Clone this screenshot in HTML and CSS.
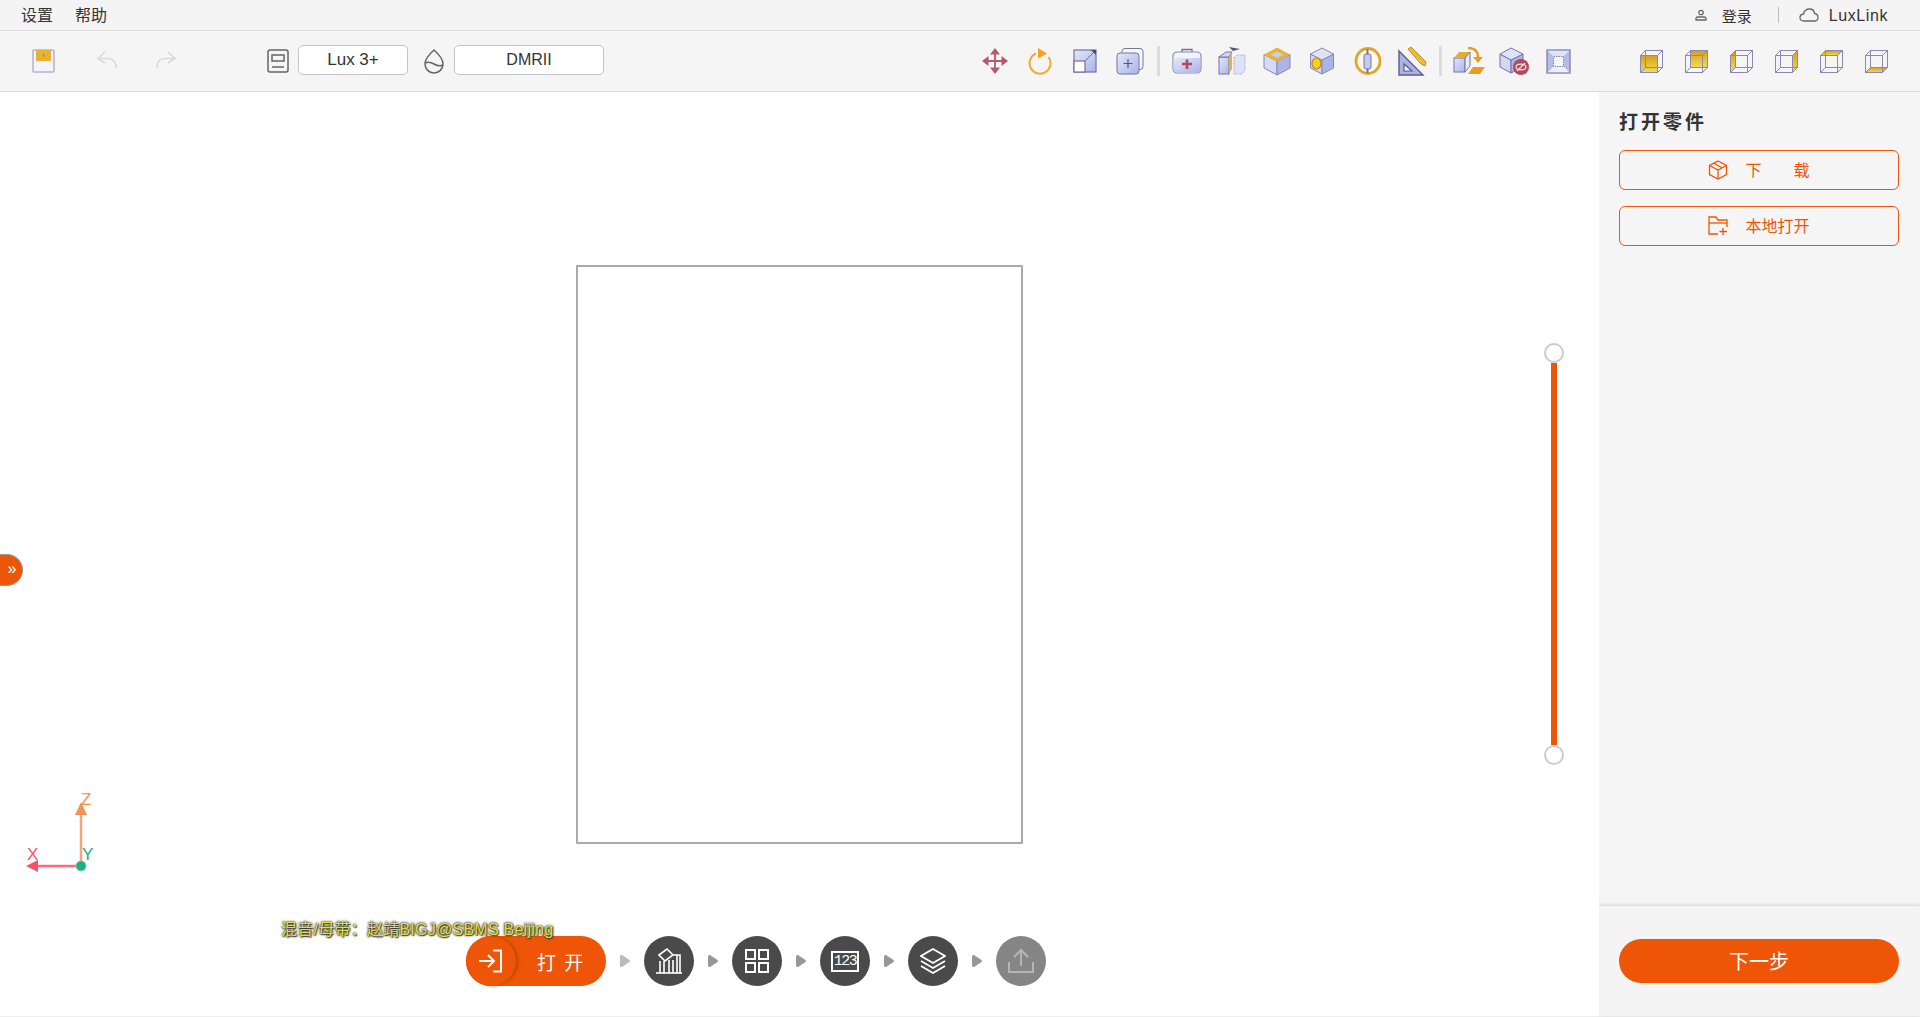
FILE: index.html

```html
<!DOCTYPE html>
<html lang="zh-CN">
<head>
  <meta charset="UTF-8" />
  <title>LuxLink</title>
  <link rel="stylesheet" href="styles.css">
</head>
<body>
  <svg class="defs" width="0" height="0">
    <defs>
      <linearGradient id="blue" x1="0" y1="0" x2="1" y2="1">
        <stop offset="0" stop-color="#e4e8fa" />
        <stop offset="1" stop-color="#a9b4ea" />
      </linearGradient>
      <linearGradient id="gold" x1="0" y1="0" x2="0" y2="1">
        <stop offset="0" stop-color="#d99a1e" />
        <stop offset="1" stop-color="#efe04e" />
      </linearGradient>
      <symbol id="wire" viewBox="0 0 24 24">
        <g fill="none" stroke="#8b86b3" stroke-width="1">
          <rect x="1.500" y="6.500" width="17" height="17" />
          <rect x="6.500" y="1.500" width="17" height="17" />
          <path d="M1.500 6.500l5-5M18.500 6.500l5-5M18.500 23.500l5-5M1.500 23.500l5-5" />
        </g>
      </symbol>
    </defs>
  </svg>

  <div class="menubar">
    <div class="menu-left">
      <span>设置</span>
      <span>帮助</span>
    </div>
    <div class="menu-right">
      <svg class="user-icon" width="12" height="12" viewBox="0 0 12 12" fill="none" stroke="#666" stroke-width="1.300">
        <circle cx="6" cy="3.500" r="2.200" />
        <path d="M1 11V9.500Q1 8 3 8H9Q11 8 11 9.500V11Z" />
      </svg>
      <span class="login">登录</span>
      <span class="menu-sep"></span>
      <svg class="cloud-icon" width="20" height="14" viewBox="0 0 20 14" fill="none" stroke="#666" stroke-width="1.300">
        <path d="M5 13Q1 13 1 9.500Q1 6.500 4.500 6Q5.500 1 10.500 1Q15 1 15.500 5.500Q19 6 19 9.500Q19 13 15 13Z" />
      </svg>
      <span class="luxlink">LuxLink</span>
    </div>
  </div>

  <div class="toolbar">
    <svg class="save-icon" width="23" height="24" viewBox="0 0 23 24">
      <rect x="1" y="1" width="21" height="22" rx="1" fill="#f4f4f8" stroke="#b5b0cc" stroke-width="1.500" />
      <rect x="4" y="1" width="15" height="11" rx="1" fill="#e5b23a" />
      <rect x="11" y="5" width="1" height="3" fill="#a87a10" />
    </svg>
    <svg class="undo-icon" width="22" height="20" viewBox="0 0 22 20" fill="none" stroke="#d9d9d9" stroke-width="1.600">
      <path d="M9 2L2 8.500L9 13M2 8.500H12Q20 8.500 20 18" />
    </svg>
    <svg class="redo-icon" width="22" height="20" viewBox="0 0 22 20" fill="none" stroke="#d9d9d9" stroke-width="1.600">
      <path d="M13 2L20 8.500L13 13M20 8.500H10Q2 8.500 2 18" />
    </svg>
    <svg class="model-icon" width="22" height="24" viewBox="0 0 22 24" fill="none" stroke="#666" stroke-width="1.500">
      <rect x="1" y="1" width="20" height="22" rx="2" />
      <rect x="5" y="6" width="12" height="6" />
      <path d="M5 18H17" />
    </svg>
    <button class="select-btn lux-btn">Lux 3+</button>
    <svg class="drop-icon" width="20" height="26" viewBox="0 0 20 26" fill="none" stroke="#666" stroke-width="1.500">
      <path d="M10 2Q19 10 19 16A9 9 0 0 1 1 16Q1 10 10 2Z" />
      <path d="M1 15Q5 13 10 16T19 17" />
    </svg>
    <button class="select-btn resin-btn">DMRII</button>

    <div class="tools">
      <div class="tool">
        <svg width="28" height="28" viewBox="0 0 28 28" fill="#b25a6f" stroke="none">
          <path d="M13.100 7h1.800v6.100H21V14.900h-6.100V21h-1.800v-6.100H7v-1.800h6.100Z" />
          <path d="M14 1l5 6.500H9ZM14 27l-5-6.500H19ZM1 14l6.500-5V19ZM27 14l-6.500 5V9Z" />
        </svg>
      </div>
      <div class="tool">
        <svg width="28" height="28" viewBox="0 0 28 28">
          <path d="M10 6.500A10.500 10.500 0 1 0 22.500 10" fill="none" stroke="#f5ab2e" stroke-width="2" />
          <path d="M12 1l9 5.500l-9 5Z" fill="#f5a01e" />
        </svg>
      </div>
      <div class="tool">
        <svg width="26" height="26" viewBox="0 0 26 26">
          <rect x="2" y="2" width="22" height="22" fill="url(#blue)" stroke="#7470a0" stroke-width="1.200" />
          <rect x="2" y="13" width="11" height="11" fill="#fff" stroke="#7470a0" stroke-width="1.200" />
          <path d="M13 13L24 2" stroke="#7470a0" stroke-width="1" />
          <path d="M19 2h5v5Z" fill="#4d4880" />
        </svg>
      </div>
      <div class="tool">
        <svg width="28" height="28" viewBox="0 0 28 28">
          <rect x="6" y="1.500" width="21" height="21" rx="3" fill="#f8f8fc" stroke="#77739f" stroke-width="1" />
          <rect x="1" y="6" width="22" height="21" rx="3" fill="url(#blue)" stroke="#77739f" stroke-width="1" />
          <path d="M12 12V21M7.500 16.500H16.500" stroke="#5a5680" stroke-width="1.200" />
        </svg>
      </div>
      <div class="tool-sep"></div>
      <div class="tool">
        <svg width="30" height="26" viewBox="0 0 30 26">
          <path d="M10 4V1.500H20V4" fill="none" stroke="#77739f" stroke-width="1.400" />
          <rect x="1" y="4" width="28" height="21" rx="4" fill="#f2f3fc" stroke="#8d89b0" stroke-width="1.200" />
          <path d="M1.500 10H28.500V21Q28.500 24.500 25 24.500H5Q1.500 24.500 1.500 21Z" fill="url(#blue)" />
          <path d="M15 11.500V21M10 16H20" stroke="#b5485f" stroke-width="2.600" />
        </svg>
      </div>
      <div class="tool">
        <svg width="28" height="30" viewBox="0 0 28 30">
          <path d="M11 1l11 2l-7 2Z" fill="#55507f" />
          <path d="M16 12l3-3h8v15l-3 4h-8Z" fill="#dfe3f7" stroke="#a5a9cc" stroke-width="1" stroke-dasharray="1.500 1" />
          <rect x="1" y="11" width="10" height="17" fill="url(#blue)" stroke="#77739f" stroke-width="1" />
          <path d="M1 11l7-5h6l-3 5Z" fill="#cfd6f6" stroke="#77739f" stroke-width="1" />
          <path d="M11 11l3-5v17l-3 5Z" fill="#e5b23a" />
        </svg>
      </div>
      <div class="tool">
        <svg width="30" height="30" viewBox="0 0 28 30">
          <path d="M1 8.500V22L14 29V15Z" fill="#d5daf5" stroke="#8a86b0" stroke-width="1" />
          <path d="M27 8.500V22L14 29V15Z" fill="#aab5ea" stroke="#8a86b0" stroke-width="1" />
          <path d="M14 1.500L27 8.500L14 15.500L1 8.500Z" fill="#e9b431" />
          <path d="M14 5.500L20.500 8.500L14 12L7.500 8.500Z" fill="#c5cdf0" />
        </svg>
      </div>
      <div class="tool">
        <svg width="28" height="30" viewBox="0 0 26 30">
          <path d="M1.500 8L13 14V28L1.500 22Z" fill="#d2d7f3" stroke="#8a86b0" stroke-width="1" />
          <path d="M24.500 8L13 14V28L24.500 22Z" fill="#aab5ea" stroke="#8a86b0" stroke-width="1" />
          <path d="M13 2L24.500 8L13 14L1.500 8Z" fill="#dfe3f8" stroke="#8a86b0" stroke-width="1" />
          <ellipse cx="7.500" cy="17.500" rx="4.500" ry="5.500" fill="#f0d030" stroke="#b98a16" stroke-width="1.200" />
        </svg>
      </div>
      <div class="tool">
        <svg width="28" height="28" viewBox="0 0 28 28">
          <ellipse cx="15" cy="14" rx="12" ry="12.500" fill="#fdf9ef" stroke="#e3a42c" stroke-width="2.800" />
          <rect x="11" y="7" width="7" height="15" rx="2" fill="#c3cbf0" stroke="#77739f" stroke-width="1" />
          <path d="M14.500 2V7M14.500 22V26" stroke="#77739f" stroke-width="2" />
        </svg>
      </div>
      <div class="tool">
        <svg width="30" height="30" viewBox="0 0 30 30">
          <path d="M11 3L14 1L29 16L28 20L24 18Z" fill="#edbb45" stroke="#c48d17" stroke-width="1" />
          <path d="M2 5L26 29H2Z" fill="#abb3e0" stroke="#5f5a90" stroke-width="1.400" />
          <path d="M7 18L15 25H7Z" fill="#f5f5f5" stroke="#5f5a90" stroke-width="1.200" />
        </svg>
      </div>
      <div class="tool-sep"></div>
      <div class="tool">
        <svg width="32" height="28" viewBox="0 0 32 28">
          <rect x="1" y="11" width="11" height="14" fill="url(#blue)" stroke="#77739f" stroke-width="1" />
          <path d="M1 11L6 5H17L12 11Z" fill="#e5ad2a" />
          <path d="M17 5V19L12 25V11Z" fill="#e7eafa" stroke="#77739f" stroke-width="1" />
          <path d="M15 1Q25 1 25 10" fill="none" stroke="#e59e1e" stroke-width="2.500" />
          <path d="M20 10H30L25 16Z" fill="#e59e1e" />
          <path d="M20 20H32L27 27H15Z" fill="#e59e1e" />
        </svg>
      </div>
      <div class="tool">
        <svg width="30" height="28" viewBox="0 0 30 28">
          <path d="M1 7L12 13V26L1 20Z" fill="#d2d7f3" stroke="#77739f" stroke-width="1" />
          <path d="M24 7L12 13V26L24 20Z" fill="#aab5ea" stroke="#77739f" stroke-width="1" />
          <path d="M12 1L24 7L12 13L1 7Z" fill="#dfe3f8" stroke="#77739f" stroke-width="1" />
          <circle cx="22" cy="20" r="8" fill="#b5485f" />
          <ellipse cx="22" cy="20" rx="5" ry="2.800" fill="none" stroke="#f5e5e8" stroke-width="1.200" />
          <path d="M18 24L26 16" stroke="#f5e5e8" stroke-width="1.200" />
        </svg>
      </div>
      <div class="tool">
        <svg width="25" height="25" viewBox="0 0 25 25">
          <rect x="1" y="1" width="23" height="23" fill="#b4bde9" stroke="#8a86b0" stroke-width="1.400" />
          <path d="M1.700 1.700L7.500 7.500H17.500L23.300 1.700Z" fill="#dfe3f7" />
          <path d="M1.700 23.300L7.500 17.500H17.500L23.300 23.300Z" fill="#eef0fb" />
          <rect x="7.500" y="7.500" width="10" height="10" fill="#f5f5f5" stroke="#8a86b0" stroke-width="1" stroke-dasharray="1.500 1" />
        </svg>
      </div>
    </div>

    <div class="tools views">
      <div class="tool">
        <svg width="24" height="24" viewBox="0 0 24 24">
          <rect x="1.500" y="6.500" width="17" height="17" fill="url(#gold)" />
          <use href="#wire" />
        </svg>
      </div>
      <div class="tool">
        <svg width="24" height="24" viewBox="0 0 24 24">
          <rect x="6.500" y="1.500" width="17" height="17" fill="url(#gold)" />
          <use href="#wire" />
        </svg>
      </div>
      <div class="tool">
        <svg width="24" height="24" viewBox="0 0 24 24">
          <path d="M1.500 6.500l5-5v17l-5 5Z" fill="url(#gold)" />
          <use href="#wire" />
        </svg>
      </div>
      <div class="tool">
        <svg width="24" height="24" viewBox="0 0 24 24">
          <path d="M18.500 6.500l5-5v17l-5 5Z" fill="url(#gold)" />
          <use href="#wire" />
        </svg>
      </div>
      <div class="tool">
        <svg width="24" height="24" viewBox="0 0 24 24">
          <path d="M1.500 6.500l5-5h17l-5 5Z" fill="url(#gold)" />
          <use href="#wire" />
        </svg>
      </div>
      <div class="tool">
        <svg width="24" height="24" viewBox="0 0 24 24">
          <path d="M1.500 23.500l5-5h17l-5 5Z" fill="url(#gold)" />
          <use href="#wire" />
        </svg>
      </div>
    </div>
  </div>

  <div class="main">
    <div class="canvas">
      <div class="build-plate"></div>

      <div class="toggle">»</div>

      <div class="slider">
        <span class="knob"></span>
        <span class="slider-bar"></span>
        <span class="knob"></span>
      </div>

      <svg class="axes" width="80" height="90" viewBox="0 0 80 90">
        <path d="M61 76V24" stroke="#f5a679" stroke-width="2.500" />
        <path d="M61 12l6 13h-12Z" fill="#f59356" />
        <path d="M61 76H14" stroke="#ff6b7c" stroke-width="2.500" />
        <path d="M6 76l12-6v12Z" fill="#ff5066" />
        <circle cx="61" cy="76" r="5" fill="#1fae7f" stroke="#6fcfae" stroke-width="1" />
        <text class="axis-label" x="61" y="15" fill="#f59356">Z</text>
        <text class="axis-label" x="7" y="70" fill="#ff5066">X</text>
        <text class="axis-label" x="62" y="70" fill="#1fae7f">Y</text>
      </svg>

      <div class="caption">混音/母带：赵靖BIGJ@SBMS Beijing</div>

      <div class="stepper">
        <div class="step-current">
          <span class="step-current-icon">
            <svg width="26" height="26" viewBox="0 0 26 26" fill="none" stroke="#fff" stroke-width="2">
              <path d="M1 13H15M10 7L16 13L10 19" />
              <path d="M15 2.500H23V23.500H15" />
            </svg>
          </span>
          <span class="step-current-text">打 开</span>
        </div>
        <span class="step-arrow first"></span>
        <div class="step">
          <svg width="28" height="28" viewBox="0 0 28 28" fill="none" stroke="#fff" stroke-width="1.600">
            <path d="M1 26H27" />
            <path d="M5 26V14M9 26V14M14 26V13M18 26V13M22 26V8" />
            <path d="M4 8L12 2L18 8L10 14Z" />
            <path d="M18 8H25V26" />
          </svg>
        </div>
        <span class="step-arrow"></span>
        <div class="step">
          <svg width="24" height="24" viewBox="0 0 24 24" fill="none" stroke="#fff" stroke-width="2">
            <rect x="1" y="1" width="9" height="9" />
            <rect x="14" y="1" width="9" height="9" />
            <rect x="1" y="14" width="9" height="9" />
            <rect x="14" y="14" width="9" height="9" />
          </svg>
        </div>
        <span class="step-arrow"></span>
        <div class="step">
          <span class="count-box">123</span>
        </div>
        <span class="step-arrow"></span>
        <div class="step">
          <svg width="26" height="26" viewBox="0 0 26 26" fill="none" stroke="#fff" stroke-width="1.800">
            <path d="M13 1L25 8L13 15L1 8Z" />
            <path d="M1 13L13 20L25 13" />
            <path d="M1 18L13 25L25 18" />
          </svg>
        </div>
        <span class="step-arrow"></span>
        <div class="step step-disabled">
          <svg width="26" height="26" viewBox="0 0 26 26" fill="none" stroke="#b5b5b5" stroke-width="2">
            <path d="M13 18V2M6 9L13 2L20 9" />
            <path d="M1 14V24H25V14" />
          </svg>
        </div>
      </div>
    </div>

    <div class="panel">
      <div class="panel-body">
        <div class="panel-title">打开零件</div>
        <button class="outline-btn">
          <svg width="20" height="20" viewBox="0 0 20 20" fill="none" stroke="#ee5506" stroke-width="1.300">
            <path d="M10 1L18.500 5.500V14.500L10 19L1.500 14.500V5.500Z" />
            <path d="M1.500 5.500L10 10L18.500 5.500M10 10V19" />
            <path d="M6 3.200L14 7.800" />
          </svg>
          <span class="btn-label">下　　载</span>
        </button>
        <button class="outline-btn">
          <svg width="20" height="20" viewBox="0 0 20 20" fill="none" stroke="#ee5506" stroke-width="1.300">
            <path d="M10 18H1V1H8L10 4H19V11" />
            <path d="M1 7H19" />
            <path d="M15 12V19M11.500 15.500H19" />
          </svg>
          <span class="btn-label">本地打开</span>
        </button>
      </div>
      <div class="panel-footer">
        <button class="next-btn">下一步</button>
      </div>
    </div>
  </div>
</body>
</html>
```

FILE: styles.css

```css
* {
  box-sizing: border-box;
}
html, body {
  height: 100%;
}
body {
  font-family: 'Liberation Sans', 'Noto Sans CJK SC', sans-serif;
  margin: 0;
  padding: 0;
  background: #fff;
  color: #333;
  display: flex;
  flex-direction: column;
  overflow: hidden;
}
button {
  font-family: inherit;
  cursor: pointer;
}
.defs {
  position: absolute;
}

.menubar {
  height: 31px;
  flex: none;
  background: #f4f4f4;
  border-bottom: 1px solid #ddd;
  display: flex;
  justify-content: space-between;
  align-items: center;
  padding: 0 32px 0 21px;
  font-size: 16px;
}
.menu-left {
  display: flex;
  gap: 22px;
  margin-bottom: 3px;
}
.menu-right {
  display: flex;
  align-items: center;
}
.login {
  margin-left: 15px;
  font-size: 15px;
}
.menu-sep {
  width: 1px;
  height: 16px;
  background: #bbb;
  margin: 0 20px 0 26px;
}
.luxlink {
  margin-left: 10px;
  margin-top: 2px;
  font-size: 16px;
  letter-spacing: 0.6px;
}

.toolbar {
  height: 61px;
  flex: none;
  background: #f5f5f5;
  border-bottom: 1px solid #ddd;
  display: flex;
  align-items: center;
  padding: 0 22px 0 32px;
}
.undo-icon {
  margin-left: 41px;
  margin-bottom: 2px;
}
.redo-icon {
  margin-left: 37px;
  margin-bottom: 2px;
}
.model-icon {
  margin-left: 90px;
}
.select-btn {
  height: 30px;
  margin-bottom: 2px;
  background: #fff;
  border: 1px solid #c4c4c4;
  border-radius: 5px;
  color: #333;
  padding: 0;
}
.lux-btn {
  width: 110px;
  margin-left: 9px;
  font-size: 17px;
}
.drop-icon {
  margin-left: 16px;
}
.resin-btn {
  width: 150px;
  margin-left: 10px;
  font-size: 16px;
}
.tools {
  display: flex;
  align-items: center;
  margin-left: auto;
}
.views {
  margin-left: 47px;
}
.tool {
  width: 45px;
  display: flex;
  justify-content: center;
  align-items: center;
}
.tool-sep {
  width: 3px;
  height: 30px;
  background: #dcdcdc;
  margin: 0 4.500px;
}

.main {
  flex: 1;
  display: flex;
  min-height: 0;
  border-bottom: 1px solid #eee;
}
.canvas {
  flex: 1;
  position: relative;
  display: flex;
  align-items: center;
  justify-content: center;
  background: #fff;
}
.build-plate {
  width: 447px;
  height: 579px;
  border: 2px solid #aaa;
  border-radius: 1px;
}
.toggle {
  position: absolute;
  left: 0;
  top: 462px;
  width: 23px;
  height: 32px;
  padding-left: 2px;
  background: #ee5506;
  border: 1px solid #999;
  border-left: none;
  border-radius: 0 16px 16px 0;
  color: #fff;
  font-size: 16px;
  line-height: 28px;
  text-align: center;
}
.slider {
  position: absolute;
  right: 35px;
  top: 251px;
  display: flex;
  flex-direction: column;
  align-items: center;
}
.knob {
  width: 20px;
  height: 20px;
  border: 2px solid #ccc;
  border-radius: 50%;
  background: #fff;
}
.slider-bar {
  width: 6px;
  height: 382px;
  background: #ee5506;
}
.axes {
  position: absolute;
  left: 20px;
  top: 698px;
}
.axis-label {
  font-size: 17px;
  font-family: 'Liberation Sans', sans-serif;
}
.caption {
  position: absolute;
  left: 281px;
  top: 828px;
  z-index: 2;
  font-size: 16px;
  line-height: 20px;
  letter-spacing: 0.25px;
  color: #e8e030;
  text-shadow: 0 0 3px #222, 0 0 2px #333, 1px 1px 1px #555;
  white-space: nowrap;
}
.stepper {
  position: absolute;
  left: 466px;
  bottom: 30px;
  display: flex;
  align-items: center;
  gap: 14px;
}
.step-current {
  width: 140px;
  height: 50px;
  border-radius: 25px;
  background: #ee5506;
  display: flex;
  align-items: center;
  color: #fff;
}
.step-current-icon {
  width: 50px;
  height: 50px;
  border-radius: 50%;
  background: #ee5506;
  box-shadow: 2px 0 3px rgba(150, 60, 0, 0.55);
  display: flex;
  align-items: center;
  justify-content: center;
}
.step-current-text {
  margin-left: 21px;
  font-size: 19px;
  letter-spacing: 1.5px;
  white-space: pre;
}
.step-arrow {
  width: 10px;
  height: 13px;
  background: #9b9794;
  clip-path: path('M0 2Q0 0 2 0.500L9.500 5.500Q11 6.500 9.500 7.500L2 12.500Q0 13 0 11Z');
}
.step-arrow.first {
  background: #bbb;
}
.step {
  width: 50px;
  height: 50px;
  border-radius: 50%;
  background: #4a4a4a;
  display: flex;
  align-items: center;
  justify-content: center;
}
.step-disabled {
  background: #858585;
}
.count-box {
  width: 28px;
  height: 21px;
  border: 2px solid #fff;
  color: #fff;
  font-size: 15px;
  line-height: 17px;
  text-align: center;
  font-family: 'Liberation Mono', monospace;
  letter-spacing: -1.5px;
}

.panel {
  width: 321px;
  flex: none;
  background: #f5f5f5;
  display: flex;
  flex-direction: column;
}
.panel-body {
  flex: 1;
  padding: 19px 21px 0 20px;
}
.panel-title {
  font-size: 19px;
  font-weight: bold;
  line-height: 24px;
  letter-spacing: 3px;
  margin-bottom: 15px;
}
.outline-btn {
  width: 280px;
  height: 40px;
  margin-bottom: 16px;
  background: transparent;
  border: 1px solid #ee5506;
  border-radius: 6px;
  color: #ee5506;
  font-size: 16px;
  display: flex;
  align-items: center;
  justify-content: center;
  gap: 17px;
  padding: 0;
}
.btn-label {
  margin-bottom: 2px;
}
.panel-footer {
  height: 110px;
  flex: none;
  background: #f4f4f4;
  box-shadow: 0 -1px 3px rgba(0, 0, 0, 0.14);
  display: flex;
  align-items: center;
  padding: 0 20px;
}
.next-btn {
  width: 280px;
  height: 44px;
  border: none;
  border-radius: 22px;
  background: #ee5506;
  color: #fff;
  font-size: 20px;
  padding: 0 0 2px;
}
```
